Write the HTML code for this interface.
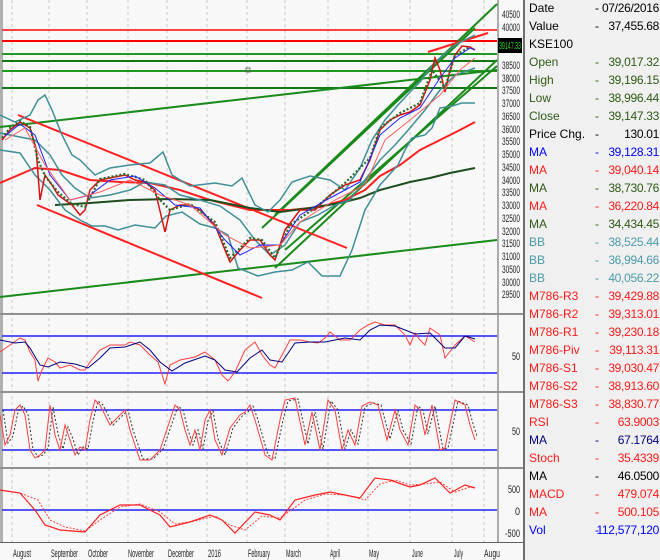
<!DOCTYPE html>
<html><head><meta charset="utf-8"><style>
*{margin:0;padding:0}
body{width:660px;height:560px;overflow:hidden;background:#f0f0f0;font-family:"Liberation Sans",sans-serif;position:relative}
#chart{position:absolute;left:0;top:0}
#panel{position:absolute;left:523px;top:0;width:137px;height:560px;background:#f0f0f0;border-left:2px solid #707070}
.r{position:absolute;left:4px;width:130px;height:18px;font-size:12px;line-height:18px;white-space:nowrap}
.r .d{position:absolute;left:66px}
.r .v{position:absolute;right:0;letter-spacing:-0.3px}
.k{color:#000}.g{color:#2d5a14}.b{color:#0000ff}.rd{color:#ff1a1a}.t{color:#4a9ba8}.nb{color:#000080}
</style></head><body>
<svg id="chart" width="524" height="560" xmlns="http://www.w3.org/2000/svg">
<rect x="0" y="0" width="524" height="560" fill="#f8f8f8"/>
<rect x="0" y="0" width="3" height="542" fill="#b0b0b0"/>
<g stroke="#c8c8c8" stroke-dasharray="3,3" stroke-width="1">
<line x1="12" y1="0" x2="12" y2="542"/><line x1="49" y1="0" x2="49" y2="542"/><line x1="87" y1="0" x2="87" y2="542"/><line x1="128" y1="0" x2="128" y2="542"/><line x1="167" y1="0" x2="167" y2="542"/><line x1="207" y1="0" x2="207" y2="542"/><line x1="247" y1="0" x2="247" y2="542"/><line x1="285" y1="0" x2="285" y2="542"/><line x1="328" y1="0" x2="328" y2="542"/><line x1="368" y1="0" x2="368" y2="542"/><line x1="410" y1="0" x2="410" y2="542"/><line x1="452" y1="0" x2="452" y2="542"/><line x1="484" y1="0" x2="484" y2="542"/>
</g>
<g stroke-width="2">
<line x1="2" y1="30" x2="497" y2="30" stroke="#ff4040"/>
<line x1="2" y1="41" x2="497" y2="41" stroke="#ff0000"/>
<line x1="2" y1="54" x2="497" y2="54" stroke="#1f9a1f"/>
<line x1="2" y1="61" x2="497" y2="61" stroke="#117711"/>
<line x1="2" y1="71" x2="497" y2="71" stroke="#1f9a1f"/>
<line x1="2" y1="88" x2="497" y2="88" stroke="#117711"/>
</g>
<rect x="246" y="68" width="4" height="4" fill="none" stroke="#555" stroke-width="0.8"/>
<g stroke="#1a8a1a" stroke-width="2" fill="none">
<line x1="0" y1="127" x2="497" y2="70"/>
<line x1="0" y1="297" x2="497" y2="240"/>
<line x1="275" y1="215" x2="497" y2="4"/>
<line x1="262" y1="228" x2="475" y2="28"/>
<line x1="275" y1="268" x2="497" y2="60"/>
<line x1="285" y1="250" x2="497" y2="66"/>
</g>
<g stroke="#ff2020" stroke-width="2" fill="none">
<line x1="18" y1="115" x2="347" y2="248"/>
<line x1="37" y1="205" x2="262" y2="298"/>
<line x1="428" y1="52" x2="488" y2="33"/>
<polyline points="0,183 35,168 60,170 90,180 120,182 150,183 180,190 210,200 250,210 290,210 320,207 345,200 365,190 380,176 400,165 420,150 440,140 460,130 475,122"/>
</g>
<polyline fill="none" stroke="#1e4d1e" stroke-width="2" points="55,205 90,203 130,200 170,199 210,200 250,208 280,212 310,208 340,203 360,198 380,190 410,182 430,178 450,173 475,168"/>
<g stroke="#3f8f97" stroke-width="1.5" fill="none">
<polyline points="0,115 15,122 30,115 38,100 45,95 52,110 62,135 72,155 80,160 95,175 110,168 130,165 150,163 163,152 172,175 190,186 215,183 232,186 242,178 255,205 268,212 280,200 292,182 310,176 330,180 345,190 360,168 372,140 385,120 398,105 410,92 420,82 430,68 440,58 455,45 475,35"/>
<polyline points="0,150 20,153 35,175 50,190 65,210 80,220 92,226 105,226 118,230 135,225 155,228 166,216 182,212 200,224 215,228 228,235 238,268 258,276 275,272 292,270 308,262 322,276 340,276 352,250 365,210 380,185 398,165 405,150 412,138 425,135 432,128 440,108 452,106 462,103 475,103"/>
<polyline points="0,133 20,137 35,140 50,155 62,175 75,188 90,198 110,195 130,190 145,182 165,185 180,195 200,200 220,206 240,220 255,240 270,255 285,245 300,222 318,215 335,205 350,200 365,180 380,160 395,145 410,128 425,110 440,90 455,75 475,68"/>
</g>
<polyline fill="none" stroke="#d81010" stroke-width="1.5" points="2,140 10,130 20,122 30,128 36,148 40,200 45,175 52,185 58,195 65,200 72,205 80,215 85,210 90,190 100,180 110,178 125,175 135,180 145,182 155,190 165,232 170,210 180,205 190,205 200,210 215,225 225,250 230,262 240,250 250,240 260,240 270,255 275,260 285,230 300,210 315,210 330,195 345,185 360,180 370,160 380,130 390,120 400,115 410,112 420,105 430,80 435,58 440,70 445,92 450,70 455,55 462,46 470,47 475,50"/>
<polyline fill="none" stroke="#2a6a2a" stroke-width="2.2" stroke-dasharray="2,2" points="2,138 10,128 20,121 30,127 38,160 45,176 58,192 72,204 85,207 100,179 125,174 145,180 160,200 170,210 190,204 215,222 230,258 250,238 262,240 275,258 290,225 315,208 345,183 370,158 380,128 400,113 420,103 432,70 445,88 455,55 470,47"/>
<polyline fill="none" stroke="#2020ff" stroke-width="1" points="5,136 20,124 35,135 50,175 70,200 90,195 110,180 135,176 155,188 175,205 200,208 225,240 240,255 260,245 280,245 300,215 330,198 360,182 380,135 400,118 420,108 440,78 455,58 470,48 475,50"/>
<polyline fill="none" stroke="#ff6060" stroke-width="1" points="5,140 25,128 45,165 70,200 100,192 130,180 160,195 190,205 225,235 250,248 280,245 300,222 335,200 365,185 385,140 410,120 440,95 460,70 475,58"/>
<rect x="498" y="0" width="26" height="542" fill="#f8f8f8"/>
<line x1="498" y1="0" x2="498" y2="542" stroke="#606060"/>
<g font-size="11" fill="#222" font-family="Liberation Sans,sans-serif" lengthAdjust="spacingAndGlyphs">
<text x="502" y="18" textLength="18" lengthAdjust="spacingAndGlyphs">40500</text><text x="502" y="31" textLength="18" lengthAdjust="spacingAndGlyphs">40000</text>
<text x="502" y="69" textLength="18" lengthAdjust="spacingAndGlyphs">38500</text><text x="502" y="82" textLength="18" lengthAdjust="spacingAndGlyphs">38000</text><text x="502" y="94" textLength="18" lengthAdjust="spacingAndGlyphs">37500</text><text x="502" y="107" textLength="18" lengthAdjust="spacingAndGlyphs">37000</text><text x="502" y="120" textLength="18" lengthAdjust="spacingAndGlyphs">36500</text><text x="502" y="133" textLength="18" lengthAdjust="spacingAndGlyphs">36000</text><text x="502" y="145" textLength="18" lengthAdjust="spacingAndGlyphs">35500</text><text x="502" y="158" textLength="18" lengthAdjust="spacingAndGlyphs">35000</text><text x="502" y="171" textLength="18" lengthAdjust="spacingAndGlyphs">34500</text><text x="502" y="184" textLength="18" lengthAdjust="spacingAndGlyphs">34000</text><text x="502" y="196" textLength="18" lengthAdjust="spacingAndGlyphs">33500</text><text x="502" y="209" textLength="18" lengthAdjust="spacingAndGlyphs">33000</text><text x="502" y="222" textLength="18" lengthAdjust="spacingAndGlyphs">32500</text><text x="502" y="235" textLength="18" lengthAdjust="spacingAndGlyphs">32000</text><text x="502" y="247" textLength="18" lengthAdjust="spacingAndGlyphs">31500</text><text x="502" y="260" textLength="18" lengthAdjust="spacingAndGlyphs">31000</text><text x="502" y="273" textLength="18" lengthAdjust="spacingAndGlyphs">30500</text><text x="502" y="286" textLength="18" lengthAdjust="spacingAndGlyphs">30000</text><text x="502" y="298" textLength="18" lengthAdjust="spacingAndGlyphs">29500</text>
<text x="512" y="360" textLength="8" lengthAdjust="spacingAndGlyphs">50</text><text x="512" y="435" textLength="8" lengthAdjust="spacingAndGlyphs">50</text>
<text x="508" y="493" textLength="12" lengthAdjust="spacingAndGlyphs">500</text><text x="515" y="515" textLength="5" lengthAdjust="spacingAndGlyphs">0</text><text x="505" y="537" textLength="15" lengthAdjust="spacingAndGlyphs">-500</text>
</g>
<rect x="498" y="38" width="24" height="15" fill="#000"/>
<text x="499" y="49" font-size="10" fill="#22dd22" textLength="22" lengthAdjust="spacingAndGlyphs">39147.33</text>
<rect x="0" y="313" width="524" height="2" fill="#909090"/>
<rect x="0" y="391" width="524" height="2" fill="#909090"/>
<rect x="0" y="467" width="524" height="2" fill="#909090"/>
<rect x="0" y="542" width="524" height="1" fill="#606060"/>
<rect x="0" y="543" width="498" height="17" fill="#f8f8f8"/>
<line x1="2" y1="336" x2="497" y2="336" stroke="#2020ff" stroke-width="1.5"/>
<line x1="2" y1="373" x2="497" y2="373" stroke="#2020ff" stroke-width="1.5"/>
<polyline fill="none" stroke="#ff4040" stroke-width="1" points="0,352 10,345 20,338 25,340 30,352 35,360 38,381 42,370 48,358 55,362 60,368 70,365 80,370 85,370 90,362 100,350 110,345 125,345 130,342 140,345 150,355 158,362 165,384 170,365 180,360 195,357 205,352 215,360 222,375 228,381 235,372 245,350 255,342 262,355 270,365 275,368 282,355 290,340 300,340 310,342 318,343 325,338 330,332 340,340 350,340 360,330 368,325 375,322 385,325 395,325 405,335 410,345 415,333 420,340 425,345 430,328 440,335 445,358 455,345 465,336 475,342"/>
<polyline fill="none" stroke="#000080" stroke-width="1" points="0,340 15,343 25,342 30,348 40,365 48,367 60,362 75,364 88,368 100,358 110,348 125,347 140,342 150,350 160,362 172,371 185,363 205,356 215,360 225,370 237,372 250,358 262,350 270,360 282,362 295,343 310,342 325,342 335,340 345,338 360,340 370,330 380,325 395,326 405,330 415,334 430,333 445,348 455,348 465,336 475,339"/>
<line x1="2" y1="410" x2="497" y2="410" stroke="#2020ff" stroke-width="1.5"/>
<line x1="2" y1="450" x2="497" y2="450" stroke="#2020ff" stroke-width="1.5"/>
<polyline fill="none" stroke="#333" stroke-width="1" stroke-dasharray="2,2" points="3,410 8,443 13,436 18,412 23,406 28,414 33,449 38,457 43,455 48,448 53,407 58,434 63,449 68,427 73,439 78,455 83,447 88,449 93,421 98,401 103,405 113,425 118,420 128,410 133,430 143,459 153,459 163,449 168,435 178,406 183,410 188,430 193,445 198,430 203,449 208,421 213,411 218,439 225,455 233,428 243,415 248,412 253,406 258,420 268,455 275,459 283,420 288,401 298,399 308,444 315,412 323,449 331,401 338,410 345,449 351,430 358,444 365,407 373,403 381,405 390,439 398,411 403,430 411,444 418,406 423,410 428,434 435,406 443,449 448,448 458,401 468,405 473,424 477,436"/>
<polyline fill="none" stroke="#ff4040" stroke-width="1" points="0,415 5,445 10,435 15,410 20,405 25,415 30,450 35,458 40,455 45,450 50,405 55,435 60,450 65,425 70,440 75,455 80,447 85,450 90,420 95,400 100,405 110,425 115,420 125,410 130,430 140,460 150,460 160,450 165,435 175,405 180,410 185,430 190,445 195,430 200,450 205,420 210,410 215,440 222,455 230,428 240,415 245,412 250,405 255,420 265,455 272,460 280,420 285,400 295,398 305,445 312,412 320,450 328,400 335,410 342,450 348,430 355,445 362,406 370,402 378,405 387,440 395,410 400,430 408,445 415,405 420,410 425,435 432,405 440,450 445,448 455,400 465,405 470,425 475,440"/>
<line x1="2" y1="510" x2="497" y2="510" stroke="#2020ff" stroke-width="1.5"/>
<polyline fill="none" stroke="#ff4040" stroke-width="1" stroke-dasharray="2,1.5" points="0,490 20,493 38,500 50,520 65,527 85,531 100,520 120,507 140,504 160,512 175,524 195,521 215,516 230,525 245,530 262,516 280,518 290,511 305,500 325,494 345,495 365,500 380,484 395,480 410,485 425,484 440,482 455,492 470,487 475,488"/>
<polyline fill="none" stroke="#ff2020" stroke-width="1.2" points="0,490 20,493 35,510 45,525 60,530 85,532 100,515 120,505 140,505 160,515 170,527 190,522 210,515 222,520 235,533 255,512 270,515 280,520 295,500 315,495 330,492 345,495 360,498 375,478 390,480 410,487 420,485 435,478 450,493 465,485 475,488"/>
<g font-size="11" fill="#222" font-family="Liberation Sans,sans-serif">
<text x="13" y="557" textLength="18" lengthAdjust="spacingAndGlyphs">August</text><text x="51" y="557" textLength="27" lengthAdjust="spacingAndGlyphs">September</text><text x="88" y="557" textLength="20" lengthAdjust="spacingAndGlyphs">October</text><text x="128" y="557" textLength="26" lengthAdjust="spacingAndGlyphs">November</text><text x="168" y="557" textLength="26" lengthAdjust="spacingAndGlyphs">December</text><text x="208" y="557" textLength="13" lengthAdjust="spacingAndGlyphs">2016</text><text x="248" y="557" textLength="22" lengthAdjust="spacingAndGlyphs">February</text><text x="286" y="557" textLength="15" lengthAdjust="spacingAndGlyphs">March</text><text x="330" y="557" textLength="10" lengthAdjust="spacingAndGlyphs">April</text><text x="369" y="557" textLength="10" lengthAdjust="spacingAndGlyphs">May</text><text x="412" y="557" textLength="11" lengthAdjust="spacingAndGlyphs">June</text><text x="454" y="557" textLength="9" lengthAdjust="spacingAndGlyphs">July</text><text x="484" y="557" textLength="16" lengthAdjust="spacingAndGlyphs">Augu</text>
</g>
</svg>
<div id="panel">
<div class="r k" style="top:-1px">Date<span class="d">-</span><span class="v">07/26/2016</span></div>
<div class="r k" style="top:17px">Value<span class="d">-</span><span class="v">37,455.68</span></div>
<div class="r k" style="top:35px">KSE100</div>
<div class="r g" style="top:53px">Open<span class="d">-</span><span class="v">39,017.32</span></div>
<div class="r g" style="top:71px">High<span class="d">-</span><span class="v">39,196.15</span></div>
<div class="r g" style="top:89px">Low<span class="d">-</span><span class="v">38,996.44</span></div>
<div class="r g" style="top:107px">Close<span class="d">-</span><span class="v">39,147.33</span></div>
<div class="r k" style="top:125px">Price Chg.<span class="d">-</span><span class="v">130.01</span></div>
<div class="r b" style="top:143px">MA<span class="d">-</span><span class="v">39,128.31</span></div>
<div class="r rd" style="top:161px">MA<span class="d">-</span><span class="v">39,040.14</span></div>
<div class="r g" style="top:179px">MA<span class="d">-</span><span class="v">38,730.76</span></div>
<div class="r rd" style="top:197px">MA<span class="d">-</span><span class="v">36,220.84</span></div>
<div class="r g" style="top:215px">MA<span class="d">-</span><span class="v">34,434.45</span></div>
<div class="r t" style="top:233px">BB<span class="d">-</span><span class="v">38,525.44</span></div>
<div class="r t" style="top:251px">BB<span class="d">-</span><span class="v">36,994.66</span></div>
<div class="r t" style="top:269px">BB<span class="d">-</span><span class="v">40,056.22</span></div>
<div class="r rd" style="top:287px">M786-R3<span class="d">-</span><span class="v">39,429.88</span></div>
<div class="r rd" style="top:305px">M786-R2<span class="d">-</span><span class="v">39,313.01</span></div>
<div class="r rd" style="top:323px">M786-R1<span class="d">-</span><span class="v">39,230.18</span></div>
<div class="r rd" style="top:341px">M786-Piv<span class="d">-</span><span class="v">39,113.31</span></div>
<div class="r rd" style="top:359px">M786-S1<span class="d">-</span><span class="v">39,030.47</span></div>
<div class="r rd" style="top:377px">M786-S2<span class="d">-</span><span class="v">38,913.60</span></div>
<div class="r rd" style="top:395px">M786-S3<span class="d">-</span><span class="v">38,830.77</span></div>
<div class="r rd" style="top:413px">RSI<span class="d">-</span><span class="v">63.9003</span></div>
<div class="r nb" style="top:431px">MA<span class="d">-</span><span class="v">67.1764</span></div>
<div class="r rd" style="top:449px">Stoch<span class="d">-</span><span class="v">35.4339</span></div>
<div class="r k" style="top:467px">MA<span class="d">-</span><span class="v">46.0500</span></div>
<div class="r rd" style="top:485px">MACD<span class="d">-</span><span class="v">479.074</span></div>
<div class="r rd" style="top:503px">MA<span class="d">-</span><span class="v">500.105</span></div>
<div class="r b" style="top:521px">Vol<span class="d">-</span><span class="v">112,577,120</span></div>
</div>
</body></html>
